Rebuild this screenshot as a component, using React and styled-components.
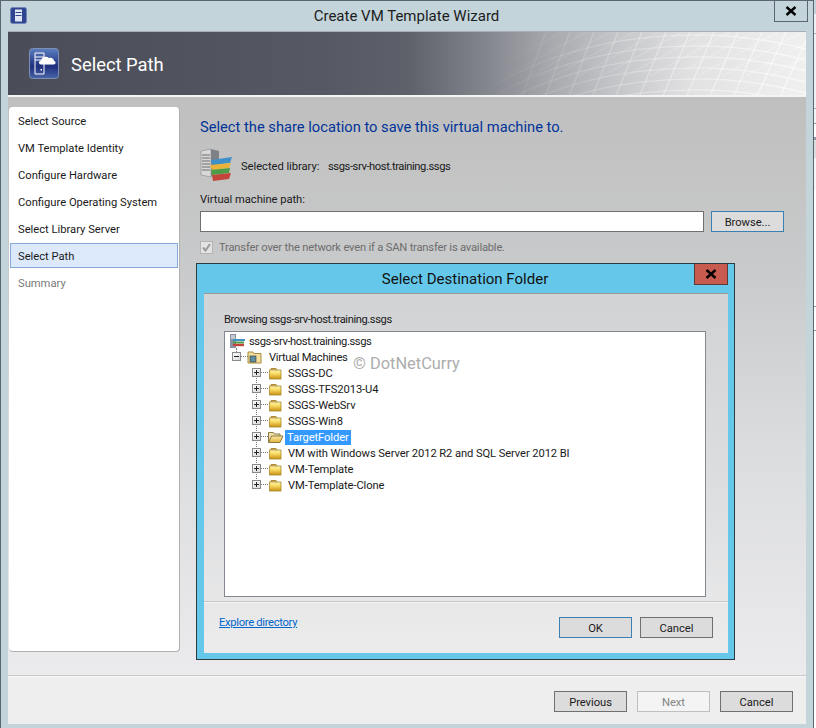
import React from "react";
import styled, { createGlobalStyle } from "styled-components";

const Global = createGlobalStyle`
  html, body { margin: 0; padding: 0; background: #fff; overflow: hidden; }
  * { box-sizing: border-box; }
  body { font-family: Roboto, "Noto Sans", sans-serif; font-size: 11.2px; letter-spacing: -0.04px; color: #1a1a1a; }
`;

const Screen = styled.div`
  display: flex;
  width: 816px;
  height: 728px;
  overflow: hidden;
`;
const Window = styled.div`
  position: relative;
  width: 814px;
  height: 728px;
  flex: none;
  display: flex;
  flex-direction: column;
  background: #c3d5db;
  border-left: 1px solid #5c6670;
  border-right: 1px solid #5c6670;
  border-top: 1px solid #5c6670;
`;
const BehindStrip = styled.div`
  flex: 1;
  background: linear-gradient(180deg,
    #c3d5db 0 14px, #eef2f4 14px 33px, #a9b4c0 33px 34px, #eef2f4 34px 108px,
    #a9b4c0 108px 109px, #f3f4f6 109px 123px, #8d99a8 123px 124px, #fff 124px 137px,
    #8d99a8 137px 140px, #ddd 140px 158px, #f6f6f6 158px 190px, #fff 190px 306px,
    #8d99a8 306px 307px, #fff 307px 330px, #8d99a8 330px 331px, #fff 331px);
`;
const TitleBar = styled.div`
  position: relative;
  height: 30px;
  flex: none;
  display: flex;
  align-items: center;
  justify-content: center;
  font-size: 15px;
  letter-spacing: 0;
  color: #1c1c1c;
  padding-right: 1px;
`;
const AppIcon = styled.svg`
  position: absolute;
  left: 9px;
  top: 6px;
  width: 17px;
  height: 17px;
`;
const FrameClose = styled.div`
  position: absolute;
  left: 773px;
  top: -1px;
  width: 34px;
  height: 22px;
  border: 1px solid #5c6670;
  display: flex;
  align-items: center;
  justify-content: center;
`;
const Client = styled.div`
  flex: 1;
  margin: 0 7px 4px 7px;
  display: flex;
  flex-direction: column;
  min-height: 0;
`;
const Header = styled.div`
  position: relative;
  height: 66px;
  flex: none;
  display: flex;
  align-items: center;
  gap: 12px;
  padding-left: 21px;
  overflow: hidden;
  border-top: 1px solid #a8b0b6;
  border-bottom: 2px solid #f4f4f4;
  background: linear-gradient(90deg, #4a4d57 0%, #565863 40%, #5e606a 50%, #84868e 60%, #a8a9ae 68%, #c4c5c8 76%, #e2e2e3 86%, #f0f0f0 100%);
`;
const HeaderMesh = styled.svg`
  position: absolute;
  right: 0;
  top: 0;
  width: 320px;
  height: 64px;
`;
const HeaderIcon = styled.svg`
  position: relative;
  flex: none;
  width: 30px;
  height: 31px;
`;
const HeaderTitle = styled.div`
  font-size: 18.4px;
  letter-spacing: 0;
  color: #fff;
  position: relative;
  top: 1px;
`;
const Body = styled.div`
  flex: 1;
  min-height: 0;
  display: flex;
  gap: 20px;
  padding: 10px 0 23px 1px;
  background: linear-gradient(180deg, #bfbfbf 0%, #c9cacb 30%, #dcdddf 62%, #ebebed 100%);
`;
const Nav = styled.div`
  width: 171px;
  flex: none;
  background: #fff;
  border-radius: 4px;
  border-right: 1px solid #b0b0b0;
  border-bottom: 1px solid #b0b0b0;
  display: flex;
  flex-direction: column;
`;
const NavItem = styled.div`
  height: ${p => (p.$active ? "25px" : "27px")};
  margin: ${p => (p.$active ? "1px 1px 1px 1px" : "0 1px")};
  display: flex;
  align-items: center;
  letter-spacing: 0;
  padding: 2px 0 0 ${p => (p.$active ? "7px" : "8px")};
  background: ${p => (p.$active ? "#dce9fb" : "transparent")};
  border: ${p => (p.$active ? "1px solid #85a9d8" : "none")};
  color: ${p => (p.$muted ? "#7a7a7a" : "#1a1a1a")};
`;
const Main = styled.div`
  flex: 1;
  display: flex;
  flex-direction: column;
  padding-right: 22px;
`;
const Heading = styled.div`
  font-size: 14.7px;
  letter-spacing: 0;
  line-height: 20px;
  color: #003399;
  margin-top: 10px;
`;
const LibraryRow = styled.div`
  display: flex;
  align-items: center;
  height: 34px;
  margin-top: 11px;
`;
const LibraryIcon = styled.svg`
  width: 33px;
  height: 34px;
  flex: none;
`;
const LibraryLabel = styled.span`
  margin-left: 8px;
  width: 87px;
  flex: none;
  position: relative;
  top: 1px;
`;
const HostName = styled.span`
  letter-spacing: -0.42px;
  position: relative;
  top: 1px;
`;
const FieldLabel = styled.div`
  margin-top: 10px;
  line-height: 16px;
`;
const FieldRow = styled.div`
  display: flex;
  gap: 7px;
  margin-top: 3px;
`;
const PathInput = styled.div`
  width: 504px;
  height: 21px;
  background: #fff;
  border: 1px solid #707070;
`;
const Btn = styled.div`
  width: 73px;
  height: 21px;
  flex: none;
  display: flex;
  align-items: center;
  justify-content: center;
  padding-top: 2px;
  background: ${p => (p.$disabled ? "#f4f4f4" : "#dcdcdc")};
  border: 1px solid ${p => (p.$disabled ? "#bfbfbf" : p.$focus ? "#3c7fb1" : "#707070")};
  color: ${p => (p.$disabled ? "#838383" : "#1a1a1a")};
`;
const CheckRow = styled.div`
  display: flex;
  align-items: center;
  gap: 6px;
  margin-top: 8px;
  height: 14px;
  letter-spacing: -0.2px;
  color: #6d6d6d;
`;
const CheckBox = styled.span`
  width: 13px;
  height: 13px;
  background: #e4e4e4;
  border: 1px solid #b4b4b4;
  display: flex;
  align-items: center;
  justify-content: center;
`;
const Footer = styled.div`
  height: 49px;
  flex: none;
  display: flex;
  justify-content: flex-end;
  gap: 10px;
  padding: 15px 13px 0 0;
  background: #eeeeef;
  border-top: 1px solid #c8c8c8;
  box-shadow: inset 0 1px 0 #f8f8f8;
`;

/* dialog floating above the wizard */
const Dialog = styled.div`
  position: absolute;
  left: 195px;
  top: 262px;
  width: 539px;
  height: 397px;
  background: #65c8ea;
  border: 1px solid #2c3a42;
  padding: 0 6px 6px 7px;
  display: flex;
  flex-direction: column;
`;
const DialogTitle = styled.div`
  height: 29px;
  flex: none;
  display: flex;
  align-items: center;
  justify-content: center;
  font-size: 15px;
  letter-spacing: 0;
  color: #111;
  padding-right: 2px;
`;
const DialogClose = styled.div`
  position: absolute;
  right: 6px;
  top: 0;
  width: 34px;
  height: 21px;
  background: #c75b4f;
  border: 1px solid #5a3a36;
  border-top: none;
  display: flex;
  align-items: center;
  justify-content: center;
`;
const DialogInner = styled.div`
  flex: 1;
  display: flex;
  flex-direction: column;
  background: linear-gradient(180deg, #d2d3d5 0%, #dedfe0 60%, #ececed 100%);
  border-top: 1px solid #9a9a9a;
  min-height: 0;
`;
const Browsing = styled.div`
  margin: 18px 0 0 20px;
  line-height: 16px;
  letter-spacing: -0.42px;
`;
const Tree = styled.div`
  position: relative;
  margin: 3px 22px 0 20px;
  height: 266px;
  flex: none;
  background: #fff;
  border: 1px solid #828790;
  padding: 1px 0 0 4px;
`;
const TreeRow = styled.div`
  position: relative;
  height: 16px;
  display: flex;
  align-items: center;
  padding-left: ${p => p.$indent}px;
  white-space: nowrap;
`;
const Expander = styled.span`
  position: absolute;
  left: ${p => p.$left}px;
  top: 3px;
  width: 9px;
  height: 9px;
  border: 1px solid #8a8a8a;
  background: linear-gradient(135deg, #fff, #d8d8d8);
  &::before {
    content: "";
    position: absolute;
    left: 1px; right: 1px; top: 3px; height: 1px;
    background: #222;
  }
  &::after {
    content: "";
    display: ${p => (p.$open ? "none" : "block")};
    position: absolute;
    top: 1px; bottom: 1px; left: 3px; width: 1px;
    background: #222;
  }
`;
const HLine = styled.span`
  position: absolute;
  left: ${p => p.$left}px;
  top: 7px;
  width: 7px;
  border-top: 1px dotted #777;
`;
const VLine = styled.span`
  position: absolute;
  left: ${p => p.$left}px;
  top: ${p => p.$top}px;
  height: ${p => p.$h}px;
  border-left: 1px dotted #777;
`;
const NodeIcon = styled.svg`
  width: ${p => p.$w || 15}px;
  height: 14px;
  flex: none;
`;
const NodeLabel = styled.span`
  margin-left: ${p => p.$gap}px;
  padding: 0 ${p => (p.$selected ? "2px" : "0")};
  line-height: 15px;
  letter-spacing: ${p => p.$spacing ?? -0.1}px;
  background: ${p => (p.$selected ? "#3399ff" : "transparent")};
  color: ${p => (p.$selected ? "#fff" : "#1a1a1a")};
`;
const Watermark = styled.div`
  position: absolute;
  left: 128px;
  top: 22px;
  font-size: 16.4px;
  letter-spacing: 0;
  color: #adadad;
`;
const DialogRule = styled.div`
  height: 2px;
  margin-top: 4px;
  flex: none;
  border-top: 1px solid #c6c6c6;
  border-bottom: 1px solid #f4f4f4;
`;
const DialogFoot = styled.div`
  display: flex;
  align-items: flex-start;
  padding: 14px 15px 0 15px;
  gap: 8px;
`;
const Link = styled.a`
  color: #0066cc;
  text-decoration: underline;
  letter-spacing: -0.3px;
  margin-right: auto;
  margin-top: -2px;
  line-height: 16px;
`;

const Cross = ({ size = 12 }) => (
  <svg width={size} height={size - 2} viewBox="0 0 12 10">
    <path d="M1.500 1 10.500 9M10.500 1 1.500 9" stroke="#000" strokeWidth="2.4" fill="none" />
  </svg>
);

const Folder = ({ open }) =>
  open ? (
    <NodeIcon $w={17} viewBox="0 0 17 14">
      <defs>
        <linearGradient id="fo" x1="0" y1="0" x2="0" y2="1">
          <stop offset="0" stopColor="#fbe9a8" />
          <stop offset="1" stopColor="#e2b23c" />
        </linearGradient>
      </defs>
      <path d="M1.500 12.500V2.500h5l1 1.500h5.500v2" fill="#efe0ad" stroke="#8d7a3f" />
      <path d="M1.500 12.500 4.500 6h11.500l-3 6.500z" fill="url(#fo)" stroke="#8d7a3f" />
    </NodeIcon>
  ) : (
    <NodeIcon viewBox="0 0 15 14">
      <defs>
        <linearGradient id="fc" x1="0" y1="0" x2="0" y2="1">
          <stop offset="0" stopColor="#fff3b4" />
          <stop offset="0.45" stopColor="#f7d65c" />
          <stop offset="1" stopColor="#c98f16" />
        </linearGradient>
      </defs>
      <path d="M3 4V2.500h5L9 4" fill="#e0c26c" stroke="#a88a3a" />
      <rect x="1.500" y="4" width="11.500" height="9" fill="url(#fc)" stroke="#a8892f" strokeWidth="0.8" />
    </NodeIcon>
  );

const folders = [
  { name: "SSGS-DC" },
  { name: "SSGS-TFS2013-U4" },
  { name: "SSGS-WebSrv" },
  { name: "SSGS-Win8" },
  { name: "TargetFolder", open: true, selected: true },
  { name: "VM with Windows Server 2012 R2 and SQL Server 2012 BI" },
  { name: "VM-Template" },
  { name: "VM-Template-Clone" },
];

const steps = [
  "Select Source",
  "VM Template Identity",
  "Configure Hardware",
  "Configure Operating System",
  "Select Library Server",
];

const Mesh = () => {
  const lines = [];
  for (let i = 0; i < 7; i++) {
    const y = 3 + i * 11;
    lines.push(<path key={"a" + i} d={`M0 ${y + 55} C90 ${y} 210 ${y - 14} 320 ${y + 14}`} />);
  }
  for (let i = 0; i < 13; i++) {
    const x = 60 + i * 24;
    lines.push(<path key={"b" + i} d={`M${x} 0 L${x - 24 - i * 0.5} 64`} />);
    lines.push(<path key={"c" + i} d={`M${x + 16} 0 L${x - 64} 44`} strokeWidth="0.7" />);
  }
  return (
    <HeaderMesh viewBox="0 0 320 64" fill="none" stroke="url(#meshFade)" strokeWidth="1.4">
      <defs>
        <linearGradient id="meshFade" gradientUnits="userSpaceOnUse" x1="0" y1="0" x2="320" y2="0">
          <stop offset="0" stopColor="#fff" stopOpacity="0" />
          <stop offset="0.3" stopColor="#fff" stopOpacity="0.16" />
          <stop offset="1" stopColor="#fff" stopOpacity="0.6" />
        </linearGradient>
      </defs>
      {lines}
    </HeaderMesh>
  );
};

export default function App() {
  return (
    <Screen>
      <Global />
      <Window>
        <TitleBar>
          <AppIcon viewBox="0 0 17 17">
            <rect x="0.500" y="0.500" width="16" height="16" rx="2" fill="#2f4590" stroke="#6f86b8" />
            <rect x="5" y="2.500" width="7" height="12" fill="#dfe6f2" />
            <path d="M5.500 5.500h6M5.500 8.500h6" stroke="#2f4590" />
          </AppIcon>
          Create VM Template Wizard
          <FrameClose><Cross /></FrameClose>
        </TitleBar>
        <Client>
          <Header>
            <Mesh />
            <HeaderIcon viewBox="0 0 30 31">
              <defs>
                <linearGradient id="lg" x1="0" y1="0" x2="0" y2="1">
                  <stop offset="0" stopColor="#5c7fc0" />
                  <stop offset="0.6" stopColor="#1f2f7e" />
                  <stop offset="1" stopColor="#4a66a8" />
                </linearGradient>
              </defs>
              <rect x="0.500" y="0.500" width="29" height="30" rx="3" fill="url(#lg)" stroke="#7d8fb5" />
              <path d="M6 5h9v21H6z" fill="none" stroke="#fff" />
              <path d="M6 9h9M6 12h9" stroke="#fff" />
              <rect x="11.500" y="21" width="1.500" height="1.500" fill="#fff" />
              <path d="M12 16.500c-2.600 0-2.600-4 0-4 .6-3.400 5-5 8-2.500 2.600-.8 5 .8 5 3 2.400.6 1.900 3.500-.4 3.500z" fill="#fff" />
            </HeaderIcon>
            <HeaderTitle>Select Path</HeaderTitle>
          </Header>
          <Body>
            <Nav>
              {steps.map(s => <NavItem key={s}>{s}</NavItem>)}
              <NavItem $active>Select Path</NavItem>
              <NavItem $muted>Summary</NavItem>
            </Nav>
            <Main>
              <Heading>Select the share location to save this virtual machine to.</Heading>
              <LibraryRow>
                <LibraryIcon viewBox="0 0 33 34">
                  <path d="M1 3 11 1v28L1 27z" fill="#d8d8d8" stroke="#8a8a8a" strokeWidth="0.6" />
                  <path d="M11 1l8 2v12l-8 14z" fill="#7d8085" />
                  <path d="M2 7h8M2 10h8M2 13h8M2 16h8M2 19h8M2 22h8" stroke="#6d6d6d" />
                  <path d="M11 12 32 9l-2 6-18 2z" fill="#3f8fc9" />
                  <path d="M10 17l21-2-2 5-17 2z" fill="#e8b33a" />
                  <path d="M11 22l19-2-1 5-17 2z" fill="#4e9c46" />
                  <path d="M12 27l19-2-2 6-16 2z" fill="#c2443a" />
                </LibraryIcon>
                <LibraryLabel>Selected library:</LibraryLabel>
                <HostName>ssgs-srv-host.training.ssgs</HostName>
              </LibraryRow>
              <FieldLabel>Virtual machine path:</FieldLabel>
              <FieldRow>
                <PathInput />
                <Btn $focus>Browse...</Btn>
              </FieldRow>
              <CheckRow>
                <CheckBox>
                  <svg width="11" height="11" viewBox="0 0 11 11">
                    <path d="M2 5.500 4.500 8.500 9 2" fill="none" stroke="#9a9a9a" strokeWidth="2" />
                  </svg>
                </CheckBox>
                Transfer over the network even if a SAN transfer is available.
              </CheckRow>
            </Main>
          </Body>
          <Footer>
            <Btn>Previous</Btn>
            <Btn $disabled>Next</Btn>
            <Btn>Cancel</Btn>
          </Footer>
        </Client>

        <Dialog>
          <DialogTitle>Select Destination Folder</DialogTitle>
          <DialogClose><Cross /></DialogClose>
          <DialogInner>
            <Browsing>Browsing ssgs-srv-host.training.ssgs</Browsing>
            <Tree>
              <VLine $left={11} $top={16} $h={10} />
              <VLine $left={31} $top={38} $h={115} />
              <TreeRow $indent={0}>
                <NodeIcon $w={16} viewBox="0 0 16 14">
                  <rect x="1" y="0" width="6" height="14" fill="#8a93a3" />
                  <path d="M2 2h4M2 4h4" stroke="#fff" />
                  <path d="M4 6h12" stroke="#3f8fc9" strokeWidth="2" />
                  <path d="M4 8.500h11" stroke="#4e9c46" strokeWidth="2" />
                  <path d="M4 11h11" stroke="#c2443a" strokeWidth="2.400" />
                </NodeIcon>
                <NodeLabel $gap={4} $spacing={-0.42}>ssgs-srv-host.training.ssgs</NodeLabel>
              </TreeRow>
              <TreeRow $indent={18}>
                <Expander $left={3} $open />
                <HLine $left={12} />
                <NodeIcon viewBox="0 0 15 14">
                  <path d="M1 13V2h5l1 1.500h7V13z" fill="#f2dfa0" stroke="#a88a3a" />
                  <rect x="3" y="6" width="6" height="6" fill="#5f8f9f" stroke="#333" strokeWidth="0.6" />
                </NodeIcon>
                <NodeLabel $gap={7} $spacing={-0.33}>Virtual Machines</NodeLabel>
              </TreeRow>
              {folders.map(f => (
                <TreeRow key={f.name} $indent={f.open ? 38 : 39}>
                  <Expander $left={23} />
                  <HLine $left={32} />
                  <Folder open={f.open} />
                  <NodeLabel $gap={f.open ? 1 : 5} $selected={f.selected}>{f.name}</NodeLabel>
                </TreeRow>
              ))}
              <Watermark>© DotNetCurry</Watermark>
            </Tree>
            <DialogRule />
            <DialogFoot>
              <Link>Explore directory</Link>
              <Btn $focus>OK</Btn>
              <Btn>Cancel</Btn>
            </DialogFoot>
          </DialogInner>
        </Dialog>
      </Window>
      <BehindStrip />
    </Screen>
  );
}
